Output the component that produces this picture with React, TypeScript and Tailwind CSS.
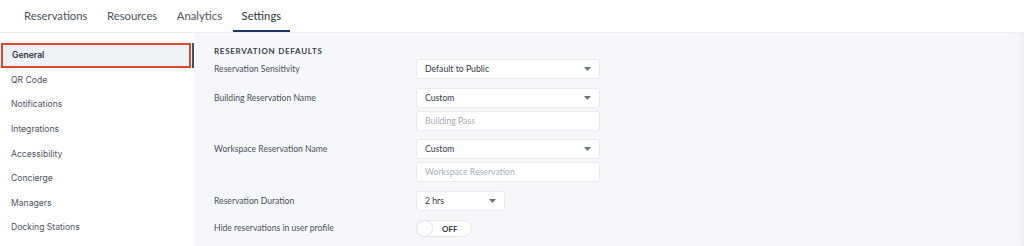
import React from "react";

const Caret = () => (
  <svg width="7" height="4" viewBox="0 0 7 4" className="shrink-0">
    <path d="M0 0 L7 0 L3.5 4 Z" fill="#6b7280" />
  </svg>
);

const Select = ({ value, w = "w-[184px]" }: { value: string; w?: string }) => (
  <div className={`${w} h-[20px] bg-white border border-[#e7eaef] rounded-[3px] flex items-center justify-between pl-[8px] pr-[8px] text-[8.7px] text-[#333a45]`}>
    <span>{value}</span>
    <Caret />
  </div>
);

const Input = ({ placeholder }: { placeholder: string }) => (
  <div className="w-[184px] h-[20px] bg-white border border-[#e7eaef] rounded-[2px] flex items-center pl-[8px] text-[8.7px] text-[#a7aebb]">
    {placeholder}
  </div>
);

export default function App() {
  const tabs = ["Reservations", "Resources", "Analytics", "Settings"];
  const side = ["QR Code", "Notifications", "Integrations", "Accessibility", "Concierge", "Managers", "Docking Stations"];
  return (
    <div className="w-[1024px] h-[246px] overflow-hidden bg-white flex flex-col" style={{ fontFamily: "Lato, 'Liberation Sans', sans-serif" }}>
      <div className="h-[33px] shrink-0 border-b border-[#eceef2] flex items-stretch pl-[15px]">
        {tabs.map((t) => (
          <div key={t} className={`px-[9px] mr-[1.5px] flex items-center text-[11.3px] relative ${t === "Settings" ? "text-[#2d3440]" : "text-[#4a5160]"}`}>
            {t}
            {t === "Settings" && <div className="absolute left-0 right-0 bottom-0 h-[2px] bg-[#1f3566]" />}
          </div>
        ))}
      </div>
      <div className="flex flex-1">
        <div className="w-[194px] shrink-0 bg-white pt-[10px] flex flex-col" style={{ fontFamily: "Inter, 'Liberation Sans', sans-serif" }}>
          <div className="h-[25px] flex items-stretch">
            <div className="ml-[1px] w-[190px] border-2 border-[#e2472b] bg-[#eef1f5] flex items-center pl-[9px] text-[8.6px] font-semibold text-[#2b303a]">
              General
            </div>
            <div className="flex-1" />
            <div className="w-[2px] bg-[#4a4f5a]" />
          </div>
          {side.map((s) => (
            <div key={s} className="h-[24.6px] flex items-center pl-[11px] text-[8.6px] text-[#4b5261]">
              {s}
            </div>
          ))}
        </div>
        <div className="flex-1 bg-[#f6f7fa] pl-[20px] pt-[13px] shadow-[inset_-10px_0_10px_-8px_rgba(0,0,0,0.06)]">
          <div className="text-[8px] font-bold tracking-[0.09em] text-[#3a3f4a] leading-[10px]">RESERVATION DEFAULTS</div>
          <div className="flex flex-col text-[8.6px] text-[#4a505c] mt-[3px]">
            <div className="flex items-center">
              <div className="w-[202px]">Reservation Sensitivity</div>
              <Select value="Default to Public" />
            </div>
            <div className="flex mt-[9px]">
              <div className="w-[202px] h-[20px] flex items-center">Building Reservation Name</div>
              <div className="flex flex-col gap-[3px]">
                <Select value="Custom" />
                <Input placeholder="Building Pass" />
              </div>
            </div>
            <div className="flex mt-[8px]">
              <div className="w-[202px] h-[20px] flex items-center">Workspace Reservation Name</div>
              <div className="flex flex-col gap-[3px]">
                <Select value="Custom" />
                <Input placeholder="Workspace Reservation" />
              </div>
            </div>
            <div className="flex items-center mt-[9px]">
              <div className="w-[202px]">Reservation Duration</div>
              <Select value="2 hrs" w="w-[89px]" />
            </div>
            <div className="flex items-center mt-[9px]">
              <div className="w-[202px]">Hide reservations in user profile</div>
              <div className="w-[56px] h-[17px] rounded-full bg-white border border-[#e3e6eb] flex items-center relative">
                <div className="w-[17px] h-[17px] rounded-full bg-white border border-[#dfe3e8] absolute left-[-1px] top-[-1px]" />
                <span className="ml-[25px] text-[8px] font-bold text-[#2f343d]">OFF</span>
              </div>
            </div>
          </div>
        </div>
      </div>
    </div>
  );
}
